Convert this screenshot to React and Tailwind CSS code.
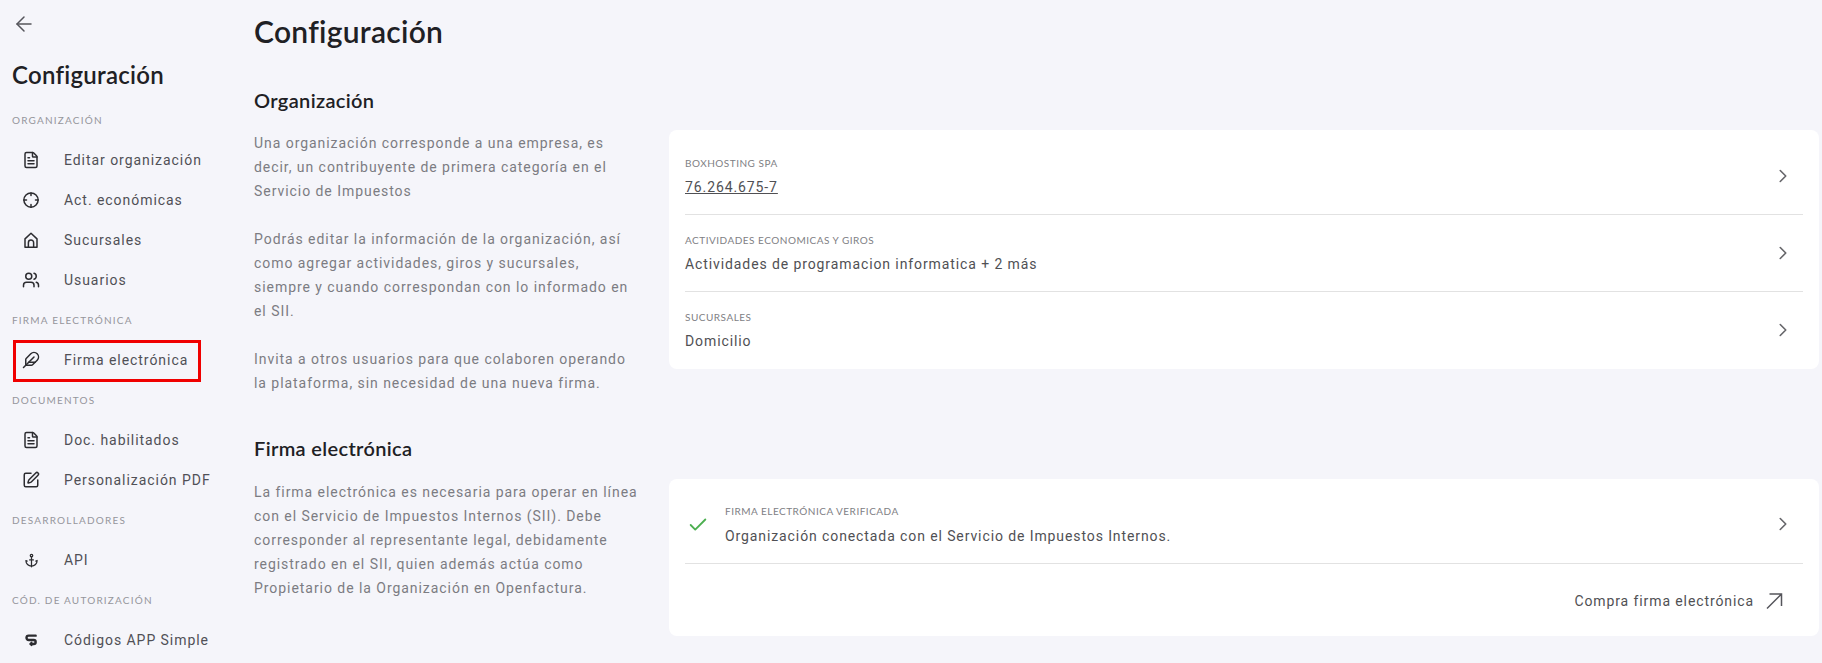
import { Anchor, ArrowLeft, Check, ChevronRight, Feather, FileText, SquarePen, Users } from "lucide-react";

const LATO = "font-['Lato','Liberation_Sans',sans-serif]";
const ROBOTO = "font-['Roboto','Liberation_Sans',sans-serif]";

function TargetIcon() {
  return (
    <svg width="18" height="18" viewBox="0 0 24 24" fill="none" stroke="currentColor" strokeWidth="2" strokeLinecap="round">
      <circle cx="12" cy="12" r="9.5" />
      <path d="M12 2.500v3.500M12 18v3.500M2.500 12H6M18 12h3.500" />
    </svg>
  );
}

function HomeIcon() {
  return (
    <svg width="18" height="18" viewBox="0 0 24 24" fill="none" stroke="currentColor" strokeWidth="2" strokeLinecap="round" strokeLinejoin="round">
      <path d="M4 21.500V10.500L12 3l8 7.500v11z" />
      <path d="M8.500 21.500V15.500a3.500 3.500 0 0 1 7 0v6" />
    </svg>
  );
}

function SimpleIcon() {
  return (
    <svg width="16" height="16" viewBox="0 0 24 24" fill="none" stroke="currentColor" strokeWidth="3.6" strokeLinecap="round" strokeLinejoin="round">
      <path d="M19 5.500H8.500a3.250 3.250 0 0 0 0 6.500h7.500a3 3 0 0 1 0 6h-4" />
      <path d="M13 15.500 10.500 18l2.500 2" strokeWidth="2.400" />
    </svg>
  );
}

function ArrowOut() {
  return (
    <svg width="18" height="18" viewBox="0 0 18 18" fill="none" stroke="currentColor" strokeWidth="1.500">
      <path d="M2 16.500 16 2.500M4.500 2h12v12" />
    </svg>
  );
}

const sidebar = [
  {
    title: "ORGANIZACIÓN",
    items: [
      { label: "Editar organización", icon: <FileText size={18} /> },
      { label: "Act. económicas", icon: <TargetIcon /> },
      { label: "Sucursales", icon: <HomeIcon /> },
      { label: "Usuarios", icon: <Users size={18} /> },
    ],
  },
  {
    title: "FIRMA ELECTRÓNICA",
    items: [{ label: "Firma electrónica", icon: <Feather size={18} />, marked: true }],
  },
  {
    title: "DOCUMENTOS",
    items: [
      { label: "Doc. habilitados", icon: <FileText size={18} /> },
      { label: "Personalización PDF", icon: <SquarePen size={18} /> },
    ],
  },
  {
    title: "DESARROLLADORES",
    items: [{ label: "API", icon: <Anchor size={15} /> }],
  },
  {
    title: "CÓD. DE AUTORIZACIÓN",
    items: [{ label: "Códigos APP Simple", icon: <SimpleIcon /> }],
  },
];

function SideItem({ item }) {
  return (
    <div className="relative flex h-10 items-center pl-[21px]">
      <span className="flex w-[20px] justify-center text-[#2c2c30]">{item.icon}</span>
      <span className={`${ROBOTO} ml-[23px] text-[14px] tracking-[0.95px] text-[#505056]`}>{item.label}</span>
      {item.marked && (
        <div className="absolute left-[13px] top-0 h-[42px] w-[188px] border-[3px] border-[#f00000]" />
      )}
    </div>
  );
}

function Sidebar() {
  return (
    <aside className="w-[254px] shrink-0">
      <div className="flex h-[48px] items-center pl-[12px] text-[#55555b]">
        <ArrowLeft size={24} strokeWidth={1.5} />
      </div>
      <h2 className={`${LATO} h-[52px] pl-[12px] text-[24px] font-semibold leading-[54px] tracking-[0.27px] text-[#202024]`}>Configuración</h2>
      {sidebar.map((group) => (
        <div key={group.title}>
          <div className={`${LATO} flex h-10 items-center pl-[12px] text-[10px] tracking-[1.2px] text-[#96969c]`}>
            {group.title}
          </div>
          {group.items.map((item) => (
            <SideItem key={item.label} item={item} />
          ))}
        </div>
      ))}
    </aside>
  );
}

function CardRow({ label, children, border, first }) {
  return (
    <div className={`flex items-center justify-between pr-[9px] ${first ? "h-[85px] pt-[8px]" : "h-[77px]"} ${border ? "border-b border-[#e2e2e2]" : "pb-[2px]"}`}>
      <div>
        <div className={`${LATO} text-[10px] leading-[16px] tracking-[0.5px] text-[#808084]`}>{label}</div>
        <div className={`${ROBOTO} mt-[6px] text-[14px] leading-[20px] tracking-[0.9px] text-[#505054]`}>{children}</div>
      </div>
      <ChevronRight size={22} strokeWidth={1.75} className="text-[#66666a]" />
    </div>
  );
}

const SectionText = ({ children }) => (
  <p className={`${ROBOTO} w-[386px] text-[14px] leading-[24px] tracking-[0.95px] text-[#7c7c82]`}>{children}</p>
);

export default function App() {
  return (
    <div className="flex min-h-[663px] w-[1822px] overflow-hidden bg-[#f5f5fa]">
      <Sidebar />
      <main className="flex-1">
        <h1 className={`${LATO} pt-[11px] text-[30px] font-semibold leading-[40px] tracking-[0.27px] text-[#202024]`}>Configuración</h1>

        <h2 className={`${LATO} mt-[35px] text-[20px] font-semibold leading-[28px] tracking-[0.35px] text-[#202024]`}>Organización</h2>
        <div className="mt-[16px] flex">
          <div className="w-[415px] pt-[1px]">
            <SectionText>
              Una organización corresponde a una empresa, es decir, un contribuyente de primera categoría en el Servicio de Impuestos
            </SectionText>
            <div className="h-6" />
            <SectionText>
              Podrás editar la información de la organización, así como agregar actividades, giros y sucursales, siempre y cuando correspondan con lo informado en el SII.
            </SectionText>
            <div className="h-6" />
            <SectionText>
              Invita a otros usuarios para que colaboren operando la plataforma, sin necesidad de una nueva firma.
            </SectionText>
          </div>
          <div className="h-[239px] w-[1150px] rounded-[8px] bg-white px-[16px]">
            <CardRow label="BOXHOSTING SPA" border first>
              <span className="underline">76.264.675-7</span>
            </CardRow>
            <CardRow label="ACTIVIDADES ECONOMICAS Y GIROS" border>
              Actividades de programacion informatica + 2 más
            </CardRow>
            <CardRow label="SUCURSALES">Domicilio</CardRow>
          </div>
        </div>

        <h2 className={`${LATO} mt-[39px] text-[20px] font-semibold leading-[28px] tracking-[0.35px] text-[#202024]`}>Firma electrónica</h2>
        <div className="mt-[17px] flex">
          <div className="w-[415px] pt-[1px]">
            <SectionText>
              La firma electrónica es necesaria para operar en línea con el Servicio de Impuestos Internos (SII). Debe corresponder al representante legal, debidamente registrado en el SII, quien además actúa como Propietario de la Organización en Openfactura.
            </SectionText>
          </div>
          <div className="h-[157px] w-[1150px] rounded-[8px] bg-white px-[16px]">
            <div className="flex h-[85px] items-center justify-between border-b border-[#e2e2e2] pr-[9px] pt-[6px]">
              <div className="flex items-center">
                <Check size={22} className="ml-[2px] mt-[2px] text-[#4caf50]" />
                <div className="ml-[16px]">
                  <div className={`${LATO} text-[10px] leading-[16px] tracking-[0.5px] text-[#808084]`}>FIRMA ELECTRÓNICA VERIFICADA</div>
                  <div className={`${ROBOTO} mt-[7px] text-[14px] leading-[20px] tracking-[0.9px] text-[#505054]`}>
                    Organización conectada con el Servicio de Impuestos Internos.
                  </div>
                </div>
              </div>
              <ChevronRight size={22} strokeWidth={1.75} className="text-[#66666a]" />
            </div>
            <div className="flex h-[72px] items-center justify-end pr-[20px] pt-[2px]">
              <span className={`${ROBOTO} text-[14px] tracking-[0.9px] text-[#505054]`}>Compra firma electrónica</span>
              <span className="ml-[11px] text-[#55555b]"><ArrowOut /></span>
            </div>
          </div>
        </div>
      </main>
    </div>
  );
}
